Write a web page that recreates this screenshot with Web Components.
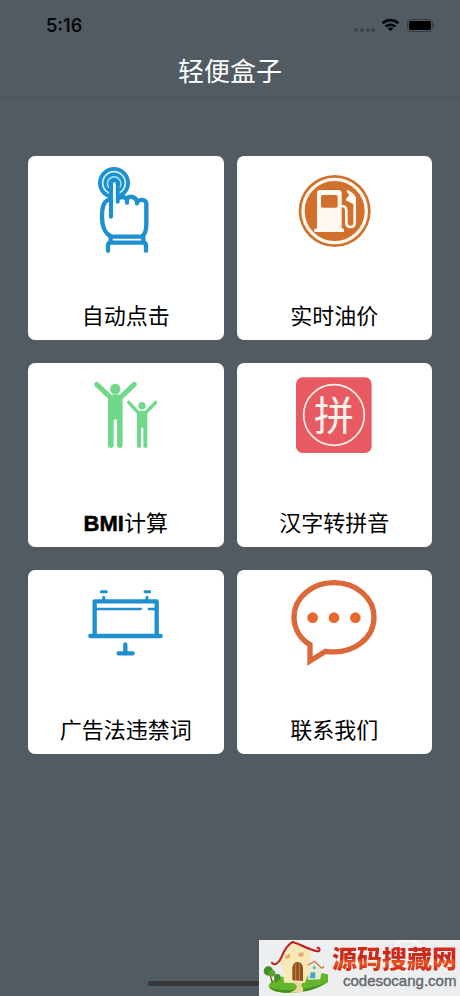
<!DOCTYPE html>
<html lang="zh-CN">
<head>
<meta charset="utf-8">
<meta name="viewport" content="width=device-width, initial-scale=1">
<title>轻便盒子</title>
<style>
html, body { margin: 0; min-height: 100%; background: #525a62; }
body { font-family: "Liberation Sans", "Noto Sans CJK SC", sans-serif; }
</style>
</head>
<body>
<toolbox-app></toolbox-app>
<script>
const define = (name, html) => {
  const template = document.createElement('template');
  template.innerHTML = html;
  customElements.define(name, class extends HTMLElement {
    constructor() {
      super();
      this.attachShadow({ mode: 'open' }).append(template.content.cloneNode(true));
    }
  });
};

define('status-bar', `
<style>
:host { display: flex; align-items: center; justify-content: space-between; height: 52px; padding: 0 22px 0 46px; color: #06090d; box-sizing: border-box; }
time { font: 600 18px/24px Inter, sans-serif; }
svg { display: block; }
</style>
<time>5:16</time>
<svg width="86" height="20" viewBox="0 0 86 20" aria-label="信号、无线网络、电池" role="img">
  <g fill="#3b434a"><circle cx="4" cy="14" r="2"/><circle cx="10" cy="14" r="2"/><circle cx="16" cy="14" r="2"/><circle cx="21" cy="14" r="2"/></g>
  <g fill="none" stroke="#06090d" stroke-width="2.6"><path d="M30.5 7.2a12 12 0 0 1 16 0"/><path d="M33.6 10.6a7.3 7.3 0 0 1 9.8 0"/></g>
  <path d="M38.5 15.3l-2.8-2.8a4.2 4.2 0 0 1 5.600 0z" fill="#06090d"/>
  <rect x="55.500" y="3.500" width="25" height="12" rx="3.500" fill="none" stroke="#343b42"/>
  <rect x="57" y="5" width="22" height="9" rx="2" fill="#000"/>
  <path d="M82 7.500q2 2 0 4z" fill="#343b42"/>
</svg>`);

define('title-bar', `
<style>
:host { display: flex; align-items: center; justify-content: center; height: 46px; padding-bottom: 6px; box-sizing: border-box; border-bottom: 1px solid #495159; }
h1 { margin: 0; color: #fff; font-size: 26px; line-height: 36px; font-weight: 400; }
</style>
<h1><slot></slot></h1>`);

define('tool-card', `
<style>
:host { display: block; }
button { display: flex; flex-direction: column; align-items: center; justify-content: space-between; width: 100%; min-height: 184px; margin: 0; padding: 0 0 7px; border: 0; border-radius: 7px; background: #fff; color: #000; font: inherit; font-size: 22px; line-height: 32px; cursor: pointer; }
::slotted(svg) { display: block; width: 100px; height: 110px; }
</style>
<button type="button"><slot name="icon"></slot><span><slot></slot></span></button>`);

define('site-mark', `
<style>
:host { display: flex; align-items: center; gap: 4px; width: 201px; height: 56px; background: #eceef0; overflow: hidden; }
svg { flex: none; }
a { display: flex; flex-direction: column; position: relative; text-decoration: none; }
strong { font-size: 25px; line-height: 25px; font-weight: 900; background: linear-gradient(#d92818, #c52a1a 45%, #ed5927 60%, #c9210f); background-clip: text; -webkit-background-clip: text; color: transparent; }
span { padding-left: 11px; font-size: 15px; line-height: 18px; color: #66686b; -webkit-text-stroke: 0.4px #66686b; }
.halo { position: absolute; left: 131px; top: -2px; width: 34px; height: 34px; box-sizing: border-box; border: 3px solid #f8f8f9; border-radius: 50%; }
</style>
<div class="halo"></div>
<svg width="69" height="56" viewBox="27 30 207 168" aria-hidden="true">
  <path d="M57 165C67 143 95 139 122 137L205 130C239 127 251 144 234 157C204 179 149 187 120 188C83 189 50 180 57 165Z" fill="#64b52b"/>
  <path d="M62 173C96 186 174 181 225 159C194 184 149 188 117 188C88 188 66 183 62 173Z" fill="#438f20"/>
  <path d="M84 92L128 36L185 63L177 130L164 159L102 158L98 115Z" fill="#f7e9b7"/>
  <path d="M177 102L193 96L216 111L211 148L174 149Z" fill="#e9ecd0"/>
  <path d="M128 158C147 166 146 178 117 188L158 186C165 173 147 168 158 158Z" fill="#f1d89d"/>
  <path d="M66 98C74 111 89 96 95 80C103 60 114 43 128 36C154 44 176 59 202 64C212 65 210 53 202 53" fill="none" stroke="#bd2022" stroke-width="6" stroke-linecap="round" stroke-linejoin="round"/>
  <path d="M174 105L194 94L212 112Q219 116 221 109" fill="none" stroke="#ca7951" stroke-width="4" stroke-linecap="round"/>
  <path d="M127 151V112Q131 96 143 96Q158 98 159 114V153Z" fill="#96501e"/>
  <path d="M137 151V103M148 152V101" stroke="#c88744" stroke-width="3"/>
  <path d="M106 78l13-6 2 10-13 6zM145 69l15-2 1 12-15 1z" fill="#eda66f"/>
  <path d="M182 127h14v18h-17z" fill="#46a9c7"/><circle cx="193" cy="113" r="5" fill="#68bad3"/>
  <path d="M58 128L67 157M81 140L77 158" stroke="#725529" stroke-width="4"/>
  <circle cx="55" cy="123" r="14" fill="#448e27"/><circle cx="66" cy="130" r="10" fill="#58a52e"/><circle cx="82" cy="142" r="10" fill="#438e26"/>
</svg>
<a href="#"><strong>源码搜藏网</strong><span>codesocang.com</span></a>`);

define('toolbox-app', `
<style>
:host { display: flex; flex-direction: column; min-height: 100vh; position: relative; background: #525a62; }
main { flex: 1; display: grid; grid-template-columns: 1fr 1fr; align-content: start; gap: 23px 13px; padding: 58px 28px 24px; }
.home { align-self: center; width: 164px; height: 5px; margin-bottom: 10px; border-radius: 3px; background: #38393b; }
site-mark { position: absolute; right: 0; bottom: 0; }
b { font-weight: 700; -webkit-text-stroke: 0.5px #000; }
</style>
<status-bar></status-bar>
<title-bar>轻便盒子</title-bar>
<main>
<tool-card>
  <svg slot="icon" viewBox="168 18 300 330" fill="none" stroke="#1e90cf" stroke-linecap="round" stroke-linejoin="round" aria-hidden="true">
    <circle cx="282" cy="99" r="48" fill="#1e90cf" stroke="none"/>
    <circle cx="282" cy="99" r="34" stroke="#c9f1fc" stroke-width="5"/>
    <path d="M266 112A20 20 0 1 1 299 112" stroke="#a8e4f8" stroke-width="5"/>
    <path d="M277 136V99Q277 94 283 94Q289 94 289 99V154" fill="#fff" stroke="none"/>
    <path d="M273 200V101Q273 91 283 91Q293 91 293 101V155" stroke-width="12"/>
    <path d="M279 196V102Q283 96 287 102V196Z" fill="#e9f9fe" stroke="none"/>
    <path d="M265 150C249 154 246 175 246 200C246 230 257 253 275 260H365C377 253 379 238 379 222V162C379 149 361 145 351 156V160M294 146Q308 136 321 147V158V148C322 137 346 137 351 154" stroke-width="13"/>
    <path d="M272 261V276M370 261V276M264 302V287Q264 278 273 278H369Q378 278 378 287V302" stroke-width="13"/>
  </svg>自动点击</tool-card>
<tool-card>
  <svg slot="icon" viewBox="163 18 300 330" aria-hidden="true">
    <circle cx="315" cy="183" r="108" fill="#d1702d"/>
    <circle cx="315" cy="183" r="95" fill="none" stroke="#fff9ed" stroke-width="10"/>
    <path d="M262 235V130Q262 120 272 120H325Q336 120 336 130V235L343 237V246H254V237Z" fill="#fff9f1"/>
    <rect x="274" y="135" width="50" height="38" rx="6" fill="#d1702d"/>
    <path d="M336 168Q350 168 350 183V217Q350 231 362 231Q375 231 375 218V150Q375 139 366 132L355 124M361 139L353 149L369 157" fill="none" stroke="#fff9f1" stroke-width="8" stroke-linecap="round" stroke-linejoin="round"/>
    <path d="M353 122L378 140V163L365 157L353 151L360 140Z" fill="#fff9f1"/>
  </svg>实时油价</tool-card>
<tool-card>
  <svg slot="icon" viewBox="168 24 300 330" fill="#6fd889" stroke="#6fd889" stroke-linecap="round" stroke-linejoin="round" aria-hidden="true">
    <circle cx="286" cy="102" r="15.500" stroke="none"/>
    <path d="M230 88L270 126H303L343 88" fill="none" stroke-width="15"/>
    <path d="M264 120H308V271Q308 279 300 279Q291 279 291 271V196Q286 190 281 196V271Q281 279 273 279Q264 279 264 271Z" stroke="none"/>
    <circle cx="366" cy="152" r="11" stroke="none"/>
    <path d="M326 142L354 172H378L407 142" fill="none" stroke-width="10"/>
    <path d="M351 168H382V273Q382 279 376 279Q370 279 370 273V220Q366 215 363 220V273Q363 279 357 279Q351 279 351 273Z" stroke="none"/>
  </svg><b>BMI</b>计算</tool-card>
<tool-card>
  <svg slot="icon" viewBox="163 24 300 330" aria-hidden="true">
    <rect x="199" y="67" width="227" height="227" rx="20" fill="#e85a62"/>
    <circle cx="313" cy="180" r="91" fill="none" stroke="#fff1e8" stroke-width="5"/>
    <text x="313" y="225" text-anchor="middle" font-size="120" font-weight="400" font-family="Noto Sans CJK SC, sans-serif" fill="#fff4ed">拼</text>
  </svg>汉字转拼音</tool-card>
<tool-card>
  <svg slot="icon" viewBox="168 30 300 330" fill="none" stroke="#1e90cf" stroke-linecap="round" stroke-linejoin="round" aria-hidden="true">
    <path d="M224 228V124H410V228" stroke-width="13"/>
    <path d="M211 228H422M316 253V279M296 280H338" stroke-width="13"/>
    <path d="M230 147H362M387 147H405" stroke-width="8"/>
    <path d="M244 95H259M375 95H389M251 112V120M381 112V120" stroke-width="9"/>
  </svg>广告法违禁词</tool-card>
<tool-card>
  <svg slot="icon" viewBox="163 30 300 330" aria-hidden="true">
    <path d="M241 303V254C214 239 193 208 193 172C193 112 248 68 313 68C378 68 433 112 433 172C433 233 373 286 288 274Z" fill="none" stroke="#da6838" stroke-width="16"/>
    <g fill="#e9662d"><circle cx="249" cy="173" r="16"/><circle cx="313" cy="173" r="16"/><circle cx="377" cy="173" r="16"/></g>
  </svg>联系我们</tool-card>
</main>
<div class="home"></div>
<site-mark></site-mark>`);
</script>
</body>
</html>
